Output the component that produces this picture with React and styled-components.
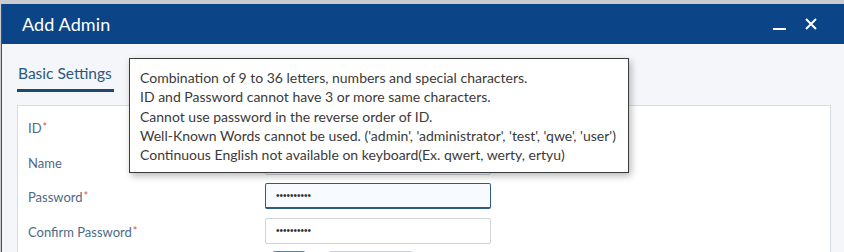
import React from 'react';
import styled, { createGlobalStyle } from 'styled-components';

const GlobalStyle = createGlobalStyle`
    html, body {
        margin: 0;
        padding: 0;
        background: #c9cbd0;
        overflow: hidden;
        font-family: Lato, "Noto Sans", "Liberation Sans", sans-serif;
    }
`;

const Dialog = styled.div`
    margin-top: 4px;
    margin-left: 1px;
    border-left: 1px solid #4a4f57;
    background-color: #f4f6fa;
    height: 260px;
    position: relative;
`;

const Header = styled.div`
    height: 40px;
    background-color: #0b4587;
    display: flex;
    align-items: center;
    justify-content: space-between;
    padding: 0 26px 0 20px;
`;

const Title = styled.h1`
    margin: 0;
    color: #ffffff;
    font-size: 18px;
    font-weight: 400;
    letter-spacing: 0.1px;
`;

const HeaderTools = styled.div`
    display: flex;
    align-items: center;
    gap: 18px;
`;

const ToolButton = styled.button`
    background: none;
    border: none;
    padding: 0;
    width: 14px;
    height: 14px;
    display: flex;
    align-items: center;
    justify-content: center;
    cursor: pointer;
`;

const Body = styled.div`
    padding: 16px 13px 0 15px;
`;

const Tabs = styled.div`
    display: flex;
`;

const Tab = styled.div`
    color: #2a5880;
    font-size: 15.5px;
    padding: 4px 2px 7px 1px;
    border-bottom: 3px solid ${p => (p.active ? '#1c4a70' : 'transparent')};
`;

const Panel = styled.div`
    margin-top: 13px;
    background-color: #ffffff;
    border: 1px solid #d6dce4;
    padding: 8px 10px;
    display: grid;
    grid-template-columns: 237px 226px;
    row-gap: 8.5px;
`;

const Label = styled.label`
    color: #4d6a84;
    font-size: 13px;
    display: flex;
    align-items: center;
    height: 26px;
    padding-top: 2px;
    box-sizing: border-box;
`;

const Required = styled.span`
    color: #d9534f;
    font-size: 11px;
    align-self: flex-start;
    margin-top: 4px;
    margin-left: 1px;
`;

const Input = styled.input`
    box-sizing: border-box;
    height: 26px;
    width: 100%;
    border: 1px solid ${p => (p.$focused ? '#2d5c7c' : '#cfd3d8')};
    border-bottom-width: ${p => (p.$focused ? '2px' : '1px')};
    border-radius: 2px;
    background-color: ${p => (p.$focused ? '#f7fbff' : '#ffffff')};
    padding: 0 10px;
    font-size: 10px;
    color: #333;
    outline: none;
`;

const Buttons = styled.div`
    grid-column: 2;
    display: flex;
    gap: 22px;
    padding-left: 7px;
    margin-top: -1px;
`;

const Button = styled.button`
    box-sizing: border-box;
    height: 30px;
    border-radius: 3px;
    border: 1px solid ${p => (p.$primary ? '#3b8fb0' : '#c9ced4')};
    background-color: ${p => (p.$primary ? '#3b8fb0' : '#ffffff')};
    color: ${p => (p.$primary ? '#fff' : '#333')};
    width: ${p => p.$width}px;
    font-size: 13px;
    font-family: inherit;
    padding: 14px 0 0 0;
`;

const Tooltip = styled.div`
    position: absolute;
    left: 127px;
    top: 54px;
    width: 478px;
    padding: 9px 10px 8px 10px;
    background: #ffffff;
    border: 1px solid #3b3b3b;
    box-shadow: 2px 3px 7px rgba(0, 0, 0, 0.28);
    color: #3a3a3a;
    font-size: 14px;
    line-height: 19.3px;
    white-space: nowrap;
`;

const rules = [
    'Combination of 9 to 36 letters, numbers and special characters.',
    'ID and Password cannot have 3 or more same characters.',
    'Cannot use password in the reverse order of ID.',
    "Well-Known Words cannot be used. ('admin', 'administrator', 'test', 'qwe', 'user')",
    'Continuous English not available on keyboard(Ex. qwert, werty, ertyu)',
];

const fields = [
    { label: 'ID', required: true, value: '' },
    { label: 'Name', required: false, value: '' },
    { label: 'Password', required: true, value: '1234567890', focused: true },
    { label: 'Confirm Password', required: true, value: '1234567890' },
];

const App = () => {
    return (
        <>
            <GlobalStyle />
            <Dialog>
                <Header>
                    <Title>Add Admin</Title>
                    <HeaderTools>
                        <ToolButton aria-label="minimize">
                            <svg width="13" height="14" viewBox="0 0 13 14">
                                <rect x="0" y="11" width="13" height="2" fill="#ffffff" />
                            </svg>
                        </ToolButton>
                        <ToolButton aria-label="close">
                            <svg width="12" height="12" viewBox="0 0 12 12">
                                <path d="M1 1 L11 11 M11 1 L1 11" stroke="#ffffff" strokeWidth="2" />
                            </svg>
                        </ToolButton>
                    </HeaderTools>
                </Header>
                <Body>
                    <Tabs>
                        <Tab active>Basic Settings</Tab>
                    </Tabs>
                    <Panel>
                        {fields.map(f => (
                            <React.Fragment key={f.label}>
                                <Label>
                                    {f.label}
                                    {f.required && <Required>*</Required>}
                                </Label>
                                <Input
                                    type="password"
                                    defaultValue={f.value}
                                    $focused={f.focused}
                                    autoFocus={f.focused}
                                />
                            </React.Fragment>
                        ))}
                        <Buttons>
                            <Button $primary $width={34}>OK</Button>
                            <Button $width={85}>Cancel</Button>
                        </Buttons>
                    </Panel>
                </Body>
                <Tooltip>
                    {rules.map(r => (
                        <div key={r}>{r}</div>
                    ))}
                </Tooltip>
            </Dialog>
        </>
    );
};

export default App;
